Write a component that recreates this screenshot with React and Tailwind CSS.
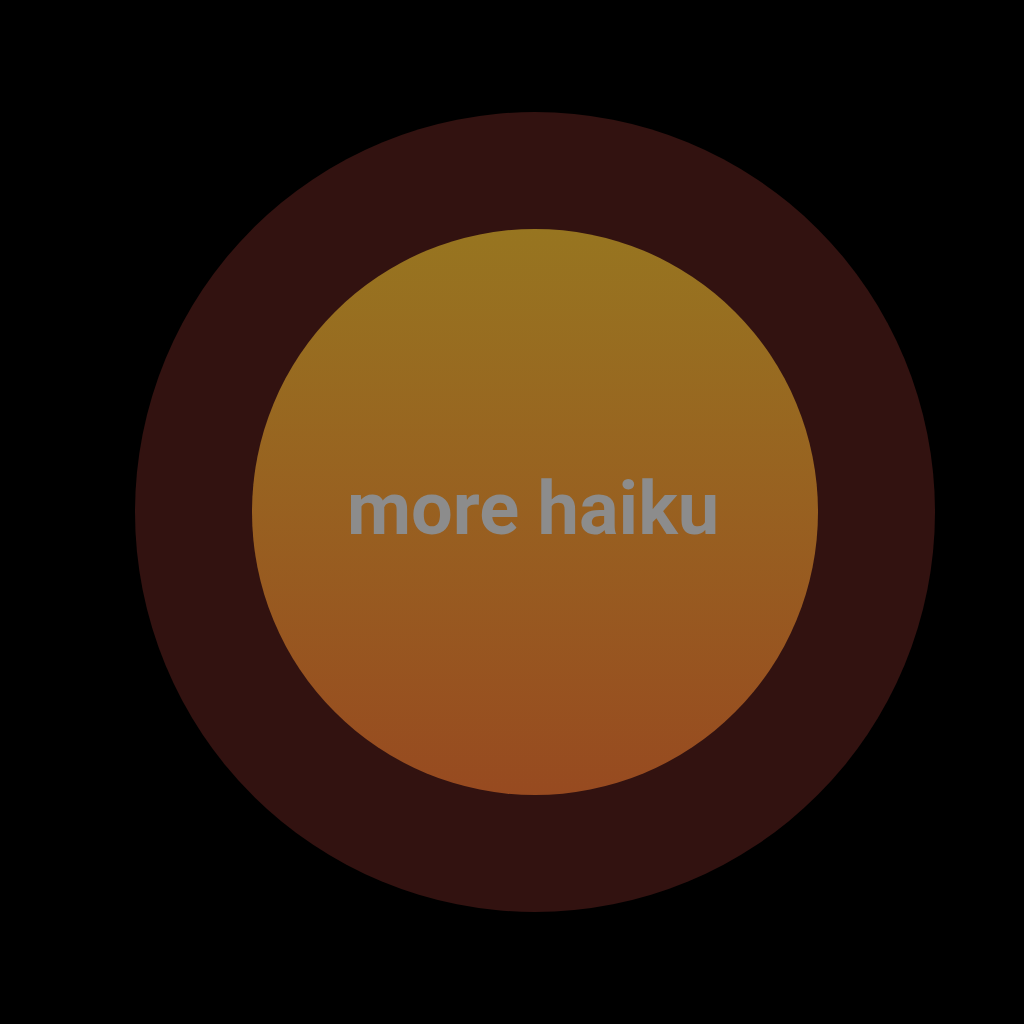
export default function App() {
  return (
    <div className="w-full h-[1024px] bg-black flex items-center justify-center pl-[46px]">
      <div className="w-[800px] h-[800px] rounded-full bg-[#321210] flex items-center justify-center">
        <button className="w-[566px] h-[566px] rounded-full bg-gradient-to-b from-[#977520] to-[#974a20] flex items-center justify-center pb-[6px] pr-[4px]">
          <span className="text-[74px] font-bold text-[#8c8c8c] font-['Roboto',sans-serif] leading-none">more haiku</span>
        </button>
      </div>
    </div>
  );
}
